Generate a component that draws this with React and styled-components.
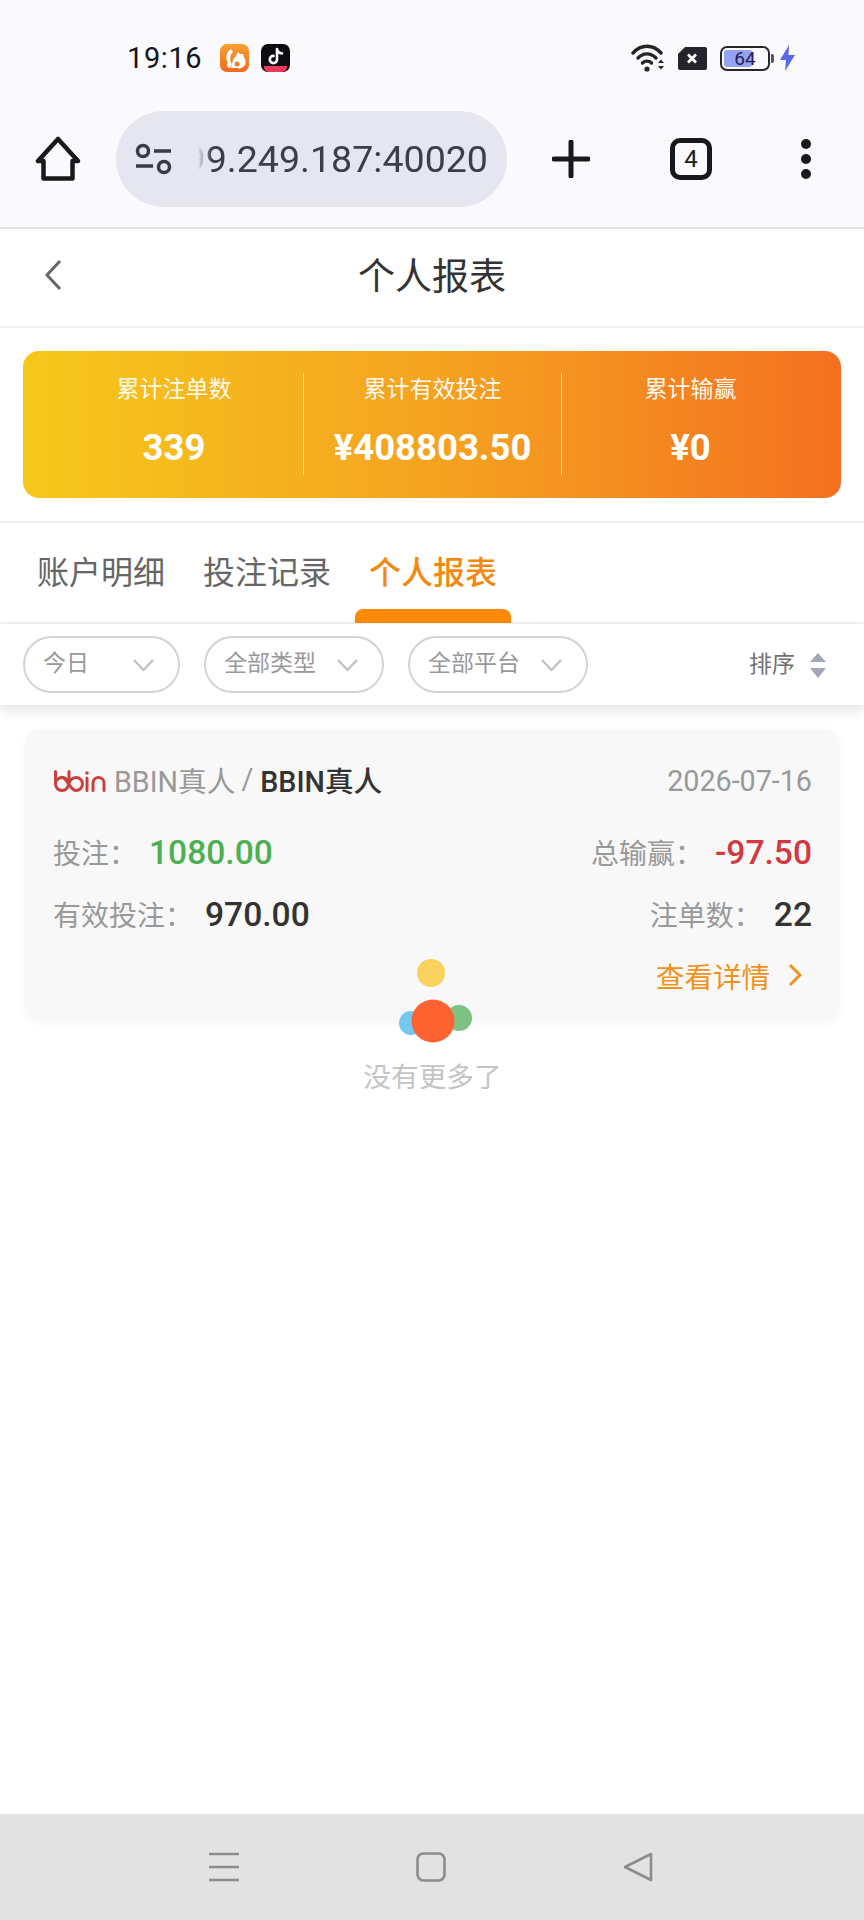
import React from 'react';
import styled, { createGlobalStyle } from 'styled-components';

const GlobalStyle = createGlobalStyle`
  html, body { margin: 0; padding: 0; background: #fff; }
  body { font-family: Roboto, "Noto Sans CJK SC", sans-serif; }
  * { box-sizing: border-box; }
`;

const Page = styled.div`
  width: 864px;
  height: 1920px;
  display: flex;
  flex-direction: column;
  overflow: hidden;
  background: #fff;
`;

const Chrome = styled.header`
  background: #f9f9fe;
  height: 229px;
  border-bottom: 2px solid #e2e2e7;
`;

const StatusBar = styled.div`
  height: 111px;
  padding: 5px 69px 0 127px;
  display: flex;
  align-items: center;
`;

const Time = styled.span`
  font-size: 29px;
  letter-spacing: 0.6px;
  color: #16161c;
  width: 93px;
`;

const StatusRight = styled.div`
  margin-left: auto;
  display: flex;
  align-items: center;
  gap: 13px;
`;

const AppIcon = styled.svg`
  display: block;
  margin-right: 12px;
`;

const Battery = styled.div`
  width: 50px;
  height: 25px;
  border: 2px solid #26262e;
  border-radius: 7px;
  padding: 2px;
  position: relative;
  display: flex;
  align-items: center;
  justify-content: center;
  font-size: 19px;
  color: #1f2350;
  margin-right: -3px;
  &::before {
    content: '';
    position: absolute;
    left: 2px;
    top: 2px;
    bottom: 2px;
    width: 28px;
    background: #96a2f2;
    border-radius: 3px;
  }
  &::after {
    content: '';
    position: absolute;
    right: -6px;
    top: 6px;
    width: 3px;
    height: 9px;
    background: #55555e;
    border-radius: 0 2px 2px 0;
  }
  span { position: relative; }
`;

const Toolbar = styled.div`
  height: 96px;
  display: grid;
  grid-template-columns: 116px 391px 128px 112px 117px;
  align-items: center;
  justify-items: center;
`;

const AddressPill = styled.div`
  width: 100%;
  height: 96px;
  border-radius: 48px;
  background: #e5e6ef;
  display: flex;
  align-items: center;
  padding: 0 19px 0 19px;
`;

const AddressText = styled.div`
  flex: 1;
  overflow: hidden;
  display: flex;
  justify-content: flex-end;
  font-size: 37.6px;
  color: #3d3d4b;
  white-space: nowrap;
  margin-left: 19px;
  -webkit-mask-image: linear-gradient(90deg, transparent 6px, #000 20px);
  mask-image: linear-gradient(90deg, transparent 6px, #000 20px);
`;

const TabCount = styled.div`
  width: 42px;
  height: 42px;
  border: 5px solid #18181f;
  border-radius: 10px;
  font-size: 24px;
  font-weight: 400;
  color: #18181f;
  display: flex;
  align-items: center;
  justify-content: center;
`;

const NavBar = styled.nav`
  height: 99px;
  padding-bottom: 7px;
  border-bottom: 2px solid #efefef;
  display: flex;
  align-items: center;
  justify-content: center;
  position: relative;
`;

const BackIcon = styled.svg`
  position: absolute;
  left: 44px;
  top: 30px;
`;

const NavTitle = styled.h1`
  margin: 0;
  font-size: 37px;
  font-weight: 400;
  color: #333;
`;

const Summary = styled.section`
  padding: 23px 23px;
  border-bottom: 2px solid #f1f1f1;
  height: 195px;
`;

const SummaryCard = styled.div`
  height: 147px;
  border-radius: 16px;
  padding: 22px 22px 23px;
  background: linear-gradient(90deg, #f6c81b 0%, #f59f20 55%, #f47020 100%);
  display: grid;
  grid-template-columns: repeat(3, 1fr);
`;

const SummaryItem = styled.div`
  display: flex;
  flex-direction: column;
  align-items: center;
  color: #fff;
  border-left: ${props => (props.$divided ? '1px solid rgba(255, 255, 255, 0.65)' : 'none')};
`;

const SummaryLabel = styled.div`
  font-size: 23px;
  line-height: 32px;
  margin-top: 1px;
  color: rgba(255, 255, 255, 0.95);
`;

const SummaryValue = styled.div`
  font-size: 36.5px;
  line-height: 44px;
  font-weight: 700;
  margin-top: 20px;
`;

const Tabs = styled.div`
  height: 101px;
  display: flex;
  padding-left: 37px;
  gap: 38px;
  border-bottom: 2px solid #f2f2f2;
  position: relative;
`;

const Tab = styled.div`
  font-size: 32px;
  line-height: 46px;
  padding-top: 27px;
  font-weight: ${props => (props.$active ? 500 : 400)};
  color: ${props => (props.$active ? '#f28a12' : '#666')};
  position: relative;
  &::after {
    content: '';
    display: ${props => (props.$active ? 'block' : 'none')};
    position: absolute;
    left: -14px;
    right: -14px;
    bottom: -1px;
    height: 14px;
    background: #ff8a00;
    border-radius: 8px 8px 0 0;
  }
`;

const Filters = styled.div`
  height: 81px;
  padding: 12px 38px 0 23px;
  display: flex;
  align-items: flex-start;
  gap: 24px;
  box-shadow: 0 6px 12px rgba(0, 0, 0, 0.1);
  position: relative;
`;

const FilterPill = styled.div`
  width: ${props => props.$width}px;
  height: 57px;
  border: 2px solid #d3d3d3;
  border-radius: 29px;
  padding: 0 24px 7px 18px;
  display: flex;
  align-items: center;
  justify-content: space-between;
  font-size: 23px;
  color: #999;
  svg { margin-top: 8px; }
`;

const Sort = styled.div`
  margin-left: auto;
  height: 58px;
  display: flex;
  align-items: center;
  gap: 15px;
  font-size: 23px;
  color: #707070;
  span { padding-bottom: 6px; }
`;

const Main = styled.main`
  flex: 1;
  padding: 24px 24px 0 25px;
`;

const ReportCard = styled.article`
  height: 292px;
  border-radius: 16px;
  background: #f8f8f8;
  box-shadow: 0 2px 8px rgba(0, 0, 0, 0.04);
  padding: 23px 28px 12px 28px;
`;

const CardHead = styled.div`
  height: 58px;
  margin-bottom: 11px;
  display: flex;
  align-items: center;
  justify-content: space-between;
  font-size: 28.7px;
`;

const Platform = styled.div`
  display: flex;
  align-items: center;
  color: #999;
  margin-bottom: 4px;
  svg { margin: 4px 7px 0 1px; }
  b { font-weight: 500; color: #333; }
`;

const Slash = styled.span`
  margin: 0 7px 0 6px;
`;

const DateText = styled.span`
  color: #999;
`;

const StatRow = styled.div`
  height: 62px;
  display: flex;
  align-items: center;
  justify-content: space-between;
`;

const Stat = styled.div`
  display: flex;
  align-items: center;
  font-size: 28px;
  color: #999;
`;

const StatValue = styled.span`
  font-size: 33.6px;
  font-weight: 500;
  margin-left: 12px;
  color: ${props => props.$color || '#333'};
`;

const DetailLink = styled.div`
  height: 60px;
  display: flex;
  align-items: center;
  justify-content: flex-end;
  gap: 18px;
  font-size: 28.5px;
  color: #f0931c;
  padding-right: 10px;
`;

const LoadMore = styled.div`
  margin-top: -63px;
  display: flex;
  flex-direction: column;
  align-items: center;
`;

const LoadText = styled.div`
  margin-top: 16px;
  font-size: 27.7px;
  line-height: 36px;
  color: #c4c4c4;
`;

const SystemBar = styled.footer`
  height: 106px;
  background: #e2e2e2;
  display: flex;
  align-items: center;
  justify-content: center;
  gap: 177px;
  padding-right: 3px;
`;

const HomeGlyph = () => (
  <svg width="46" height="46" viewBox="0 0 46 46" fill="none" stroke="#18181f" strokeWidth="4.500" strokeLinejoin="round">
    <path d="M23 3 L3 25 H8.500 V42.500 H37.500 V25 H43 Z" />
  </svg>
);

const TuneGlyph = () => (
  <svg width="38" height="32" viewBox="0 0 38 32" fill="none" stroke="#3b3b48" strokeWidth="3.500" style={{ flexShrink: 0 }}>
    <circle cx="8" cy="8" r="5.500" />
    <path d="M19 8 H36 M1 23 H18" />
    <circle cx="29" cy="24" r="5.500" />
  </svg>
);

const UcIcon = () => (
  <AppIcon width="29" height="28" viewBox="0 0 29 28">
    <defs>
      <linearGradient id="uc" x1="0" y1="0" x2="0" y2="1">
        <stop offset="0" stopColor="#f9a02e" />
        <stop offset="1" stopColor="#f26a1d" />
      </linearGradient>
    </defs>
    <rect width="29" height="28" rx="7" fill="url(#uc)" />
    <path d="M11 5 C6 8 5 15 8 19 C6 21 7 24 10 24 L12 20 C9 16 10 10 13 8 Z" fill="#fff" />
    <path d="M13 16 a6.500 6.500 0 1 1 4 8 H11 Z" fill="#fff" />
    <path d="M16 12 L18 8 L20 10 L23 10 L24 14 L19 16 Z" fill="#fff" />
    <circle cx="17" cy="20" r="2.500" fill="#f57f22" />
  </AppIcon>
);

const TikTokIcon = () => (
  <AppIcon width="29" height="28" viewBox="0 0 29 28">
    <rect width="29" height="28" rx="7" fill="#0c0c12" />
    <path d="M3 22 H26 V23 a5 5 0 0 1 -5 5 H8 a5 5 0 0 1 -5 -5 Z" fill="#ee3a5a" />
    <path d="M16 5 V15.500 a3.600 3.600 0 1 1 -3.600 -3.600 M16 5 c.4 2.600 2.200 4.200 5 4.400" fill="none" stroke="#fff" strokeWidth="2.600" strokeLinecap="round" />
  </AppIcon>
);

const WifiGlyph = () => (
  <svg width="34" height="28" viewBox="0 0 34 28" fill="none" stroke="#24242c" strokeWidth="3.400" strokeLinecap="round">
    <path d="M2 9 C10 0 22 0 30 9" />
    <path d="M7 14 C12 8.500 20 8.500 25 14" />
    <path d="M11.500 19 C14 16.500 18 16.500 20.500 19" />
    <circle cx="16" cy="25" r="2.600" fill="#24242c" stroke="none" />
    <path d="M27 19 L30 15.500 L33 19 Z M27 22 H33 L30 25.500 Z" fill="#24242c" stroke="none" />
  </svg>
);

const SimGlyph = () => (
  <svg width="29" height="23" viewBox="0 0 29 23">
    <path d="M7 0 H27 a2 2 0 0 1 2 2 V21 a2 2 0 0 1 -2 2 H2 a2 2 0 0 1 -2 -2 V7 Z" fill="#24242c" />
    <path d="M10 7.500 L18 15.500 M18 7.500 L10 15.500" stroke="#fff" strokeWidth="2.800" />
  </svg>
);

const BoltGlyph = () => (
  <svg width="15" height="26" viewBox="0 0 15 26">
    <path d="M9 0 L0 15 H6 L5 26 L15 10 H8.500 Z" fill="#5a67ea" />
  </svg>
);

const PlusGlyph = () => (
  <svg width="38" height="38" viewBox="0 0 38 38" stroke="#18181f" strokeWidth="5" strokeLinecap="round">
    <path d="M19 2 V36 M2 19 H36" />
  </svg>
);

const DotsGlyph = () => (
  <svg width="12" height="42" viewBox="0 0 12 42" fill="#18181f">
    <circle cx="6" cy="6" r="5" />
    <circle cx="6" cy="21" r="5" />
    <circle cx="6" cy="36" r="5" />
  </svg>
);

const Chevron = () => (
  <svg width="21" height="12" viewBox="0 0 21 12" fill="none" stroke="#c0c0c0" strokeWidth="2.200">
    <path d="M1 1 L10.500 11 L20 1" />
  </svg>
);

const SortGlyph = () => (
  <svg width="16" height="25" viewBox="0 0 16 25" fill="#a0a6b5">
    <path d="M8 0 L16 9 H0 Z M0 15 H16 L8 25 Z" />
  </svg>
);

const BbinLogo = () => (
  <svg width="53" height="22" viewBox="0 0 53 22" fill="none" stroke="#c9413f" strokeWidth="3" strokeLinecap="round">
    <path d="M1.500 1.500 V14 a6.500 6.500 0 1 0 6.500 -6.500 C5 7.500 3 9.500 1.500 12" />
    <path d="M8 7.500 C13 7.500 16 20.500 22 20.500 a6.500 6.500 0 1 0 0 -13 C18 7.500 15 11 15 14 V1.500" />
    <path d="M33 8 V20.500" />
    <circle cx="33" cy="3" r="1.800" fill="#c9413f" stroke="none" />
    <path d="M39 20.500 V13 a5.500 5.500 0 0 1 11 0 V20.500" />
  </svg>
);

const LoadDots = () => (
  <svg width="80" height="86" viewBox="0 0 80 86" style={{ display: 'block' }}>
    <circle cx="38" cy="15" r="14" fill="#f9d35e" />
    <circle cx="18" cy="65" r="12" fill="#74c7ee" />
    <circle cx="66" cy="60" r="13" fill="#7dc183" />
    <circle cx="40" cy="63" r="21.500" fill="#fd6331" />
  </svg>
);

const MenuGlyph = () => (
  <svg width="30" height="30" viewBox="0 0 30 30" stroke="#8c8c8c" strokeWidth="2.600">
    <path d="M0 2 H30 M0 15 H30 M0 28 H30" />
  </svg>
);

const SquareGlyph = () => (
  <svg width="30" height="30" viewBox="0 0 30 30" fill="none" stroke="#8c8c8c" strokeWidth="2.600">
    <rect x="1.500" y="1.500" width="27" height="27" rx="6" />
  </svg>
);

const TriangleGlyph = () => (
  <svg width="30" height="30" viewBox="0 0 30 30" fill="none" stroke="#8c8c8c" strokeWidth="2.600" strokeLinejoin="round">
    <path d="M28 2 V28 L2 15 Z" />
  </svg>
);

const summary = [
  { label: '累计注单数', value: '339' },
  { label: '累计有效投注', value: '¥408803.50' },
  { label: '累计输赢', value: '¥0' },
];

const filters = [
  { label: '今日', width: 157 },
  { label: '全部类型', width: 180 },
  { label: '全部平台', width: 180 },
];

export default function App() {
  return (
    <Page>
      <GlobalStyle />
      <Chrome>
        <StatusBar>
          <Time>19:16</Time>
          <UcIcon />
          <TikTokIcon />
          <StatusRight>
            <WifiGlyph />
            <SimGlyph />
            <Battery><span>64</span></Battery>
            <BoltGlyph />
          </StatusRight>
        </StatusBar>
        <Toolbar>
          <HomeGlyph />
          <AddressPill>
            <TuneGlyph />
            <AddressText>99.249.187:40020</AddressText>
          </AddressPill>
          <PlusGlyph />
          <TabCount>4</TabCount>
          <DotsGlyph />
        </Toolbar>
      </Chrome>

      <NavBar>
        <BackIcon width="18" height="32" viewBox="0 0 18 32" fill="none" stroke="#666" strokeWidth="3">
          <path d="M16 2 L3 16 L16 30" />
        </BackIcon>
        <NavTitle>个人报表</NavTitle>
      </NavBar>

      <Summary>
        <SummaryCard>
          {summary.map((item, i) => (
            <SummaryItem key={item.label} $divided={i > 0}>
              <SummaryLabel>{item.label}</SummaryLabel>
              <SummaryValue>{item.value}</SummaryValue>
            </SummaryItem>
          ))}
        </SummaryCard>
      </Summary>

      <Tabs>
        <Tab>账户明细</Tab>
        <Tab>投注记录</Tab>
        <Tab $active>个人报表</Tab>
      </Tabs>

      <Filters>
        {filters.map(f => (
          <FilterPill key={f.label} $width={f.width}>
            {f.label}
            <Chevron />
          </FilterPill>
        ))}
        <Sort>
          <span>排序</span>
          <SortGlyph />
        </Sort>
      </Filters>

      <Main>
        <ReportCard>
          <CardHead>
            <Platform>
              <BbinLogo />
              BBIN真人<Slash>/</Slash><b>BBIN真人</b>
            </Platform>
            <DateText>2026-07-16</DateText>
          </CardHead>
          <StatRow>
            <Stat>投注：<StatValue $color="#4caf50">1080.00</StatValue></Stat>
            <Stat>总输赢：<StatValue $color="#d0393f">-97.50</StatValue></Stat>
          </StatRow>
          <StatRow>
            <Stat>有效投注：<StatValue>970.00</StatValue></Stat>
            <Stat>注单数：<StatValue>22</StatValue></Stat>
          </StatRow>
          <DetailLink>
            查看详情
            <svg width="14" height="24" viewBox="0 0 14 24" fill="none" stroke="#f0931c" strokeWidth="3">
              <path d="M2 2 L12 12 L2 22" />
            </svg>
          </DetailLink>
        </ReportCard>
        <LoadMore>
          <LoadDots />
          <LoadText>没有更多了</LoadText>
        </LoadMore>
      </Main>

      <SystemBar>
        <MenuGlyph />
        <SquareGlyph />
        <TriangleGlyph />
      </SystemBar>
    </Page>
  );
}
